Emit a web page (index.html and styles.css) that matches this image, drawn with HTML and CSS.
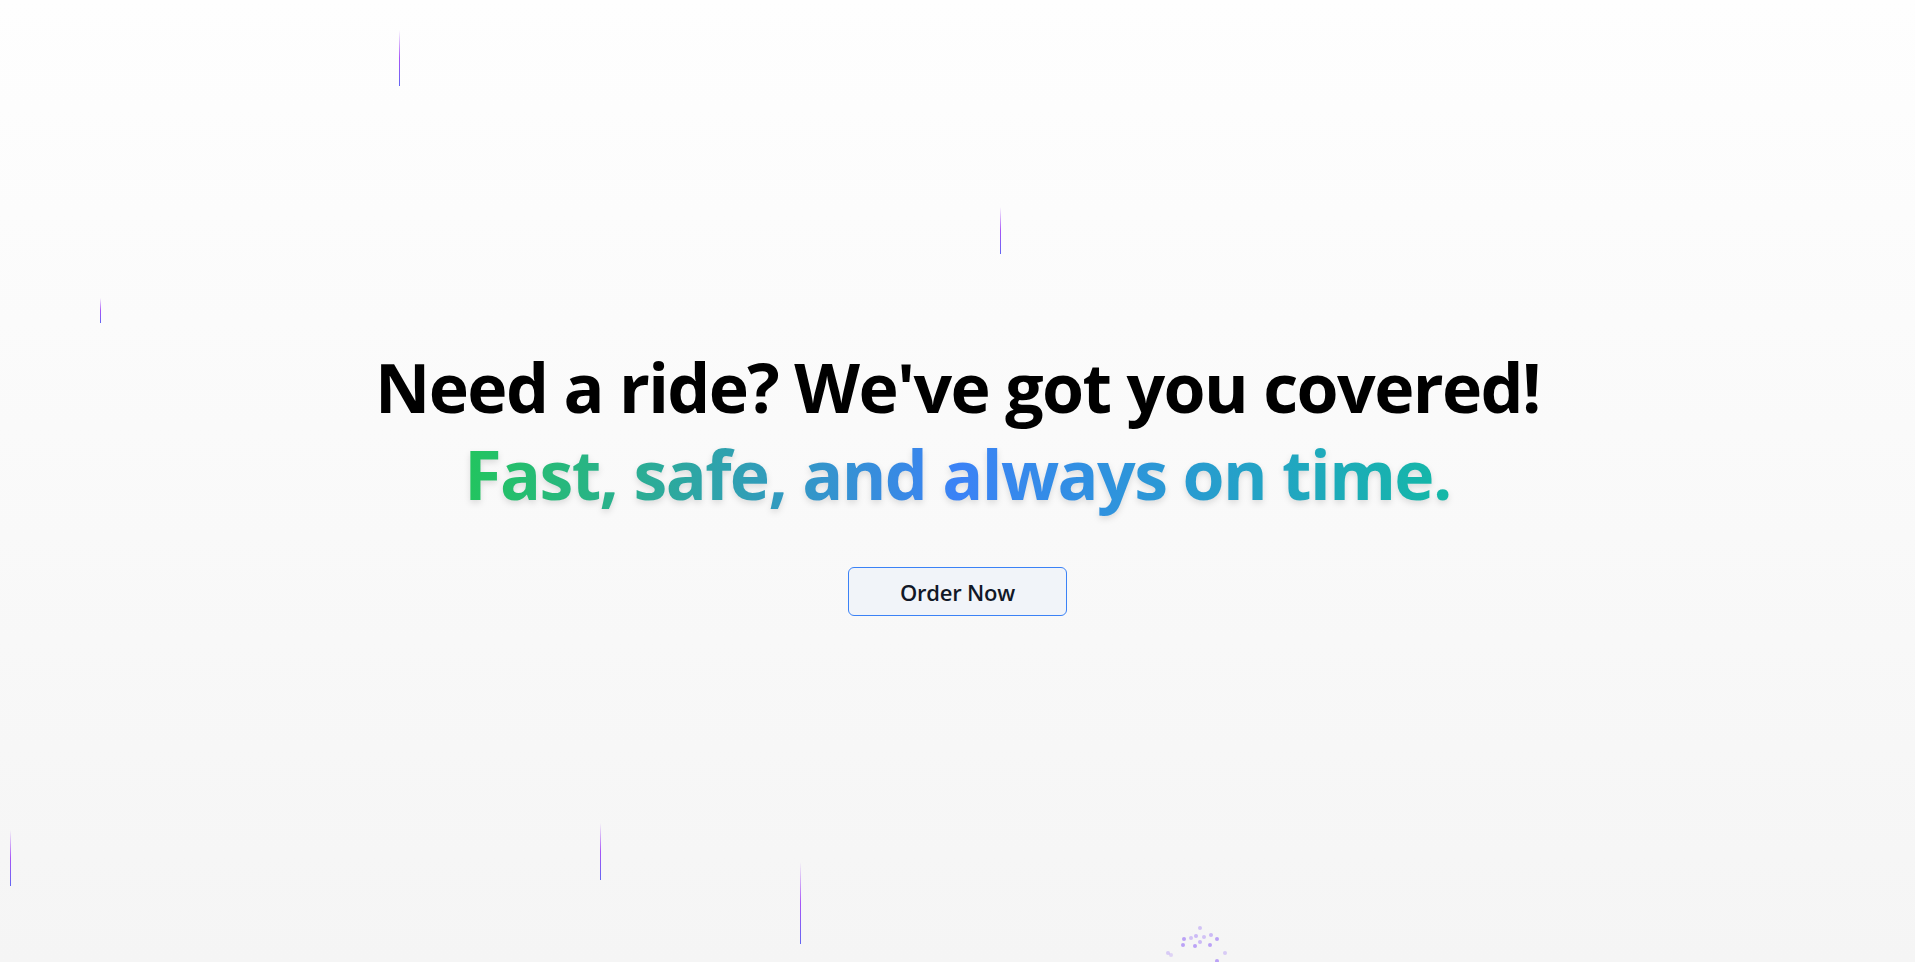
FILE: index.html
```html
<!DOCTYPE html>
<html lang="en">
<head>
<meta charset="utf-8">
<title>Need a ride?</title>
<link rel="stylesheet" href="styles.css">
</head>
<body>
<main class="hero">
  <div class="streaks" aria-hidden="true">
    <span class="streak s1"></span>
    <span class="streak s2"></span>
    <span class="streak s3"></span>
    <span class="streak s4"></span>
    <span class="streak s5"></span>
    <span class="streak s6"></span>
  </div>
  <div class="sparkles" aria-hidden="true">
    <span class="dot d1"></span><span class="dot d2"></span><span class="dot d3"></span>
    <span class="dot d4"></span><span class="dot d5"></span><span class="dot d6"></span>
    <span class="dot d7"></span><span class="dot d8"></span><span class="dot d9"></span>
    <span class="dot d10"></span><span class="dot d11"></span><span class="dot d12"></span>
    <span class="dot d13"></span><span class="dot d14"></span><span class="dot d15"></span>
  </div>
  <div class="content">
    <h1 class="title">
      <span class="line">Need a ride? We've got you covered!</span>
      <span class="line accent">Fast, safe, and always on time.</span>
    </h1>
    <button class="cta" type="button">Order Now</button>
  </div>
</main>
</body>
</html>
```

FILE: styles.css
```css
* { box-sizing: border-box; }
html, body { margin: 0; padding: 0; }
body {
  font-family: "Open Sans", "Noto Sans", sans-serif;
  background: linear-gradient(to bottom, #fefefe 0%, #f5f5f5 100%);
  min-height: 100vh;
  overflow: hidden;
}
.hero {
  position: relative;
  height: 962px;
  display: flex;
  align-items: center;
  justify-content: center;
}
.content {
  display: flex;
  flex-direction: column;
  align-items: center;
  gap: 50px;
  padding-bottom: 3px;
}
.title {
  margin: 0;
  font-weight: 700;
  font-size: 68px;
  line-height: 87px;
  letter-spacing: -1.6px;
  text-align: center;
  color: #000;
  display: flex;
  flex-direction: column;
  align-items: center;
}
.line { display: block; }
.accent {
  background: linear-gradient(to right, #22c55e 0%, #3b82f6 50%, #14b8a6 100%);
  -webkit-background-clip: text;
  background-clip: text;
  color: transparent;
  filter: drop-shadow(0 3px 3px rgba(0, 0, 0, 0.12));
}
.cta {
  font-family: "Open Sans", "Noto Sans", sans-serif;
  font-size: 22px;
  font-weight: 600;
  line-height: 28px;
  letter-spacing: -0.2px;
  color: #111827;
  background: #f1f4f9;
  border: 1px solid #3b82f6;
  border-radius: 6px;
  padding: 9px 20px;
  width: 219px;
  height: 49px;
  cursor: pointer;
}
.streaks, .sparkles {
  position: absolute;
  inset: 0;
  pointer-events: none;
}
.streak {
  position: absolute;
  width: 1px;
  background: linear-gradient(to bottom, rgba(168, 85, 247, 0) 0%, #a855f7 50%, #6366f1 100%);
}
.s1 { left: 399px; top: 30px; height: 56px; }
.s2 { left: 1000px; top: 207px; height: 47px; }
.s3 { left: 10px; top: 830px; height: 56px; }
.s4 { left: 600px; top: 823px; height: 57px; }
.s5 { left: 800px; top: 862px; height: 82px; }
.s6 { left: 100px; top: 298px; height: 25px; }
.dot {
  position: absolute;
  width: 4px;
  height: 4px;
  border-radius: 50%;
  background: rgba(139, 92, 246, 0.55);
}
.d1 { left: 1198px; top: 926px; opacity: 0.6; }
.d2 { left: 1182px; top: 937px; }
.d3 { left: 1189px; top: 936px; opacity: 0.6; }
.d4 { left: 1194px; top: 934px; opacity: 0.7; }
.d5 { left: 1202px; top: 935px; opacity: 0.6; }
.d6 { left: 1209px; top: 933px; opacity: 0.7; }
.d7 { left: 1215px; top: 937px; }
.d8 { left: 1198px; top: 940px; opacity: 0.7; }
.d9 { left: 1181px; top: 943px; }
.d10 { left: 1193px; top: 944px; }
.d11 { left: 1208px; top: 943px; }
.d12 { left: 1166px; top: 951px; opacity: 0.5; }
.d13 { left: 1169px; top: 953px; opacity: 0.4; }
.d14 { left: 1223px; top: 951px; opacity: 0.5; }
.d15 { left: 1215px; top: 959px; }
```
